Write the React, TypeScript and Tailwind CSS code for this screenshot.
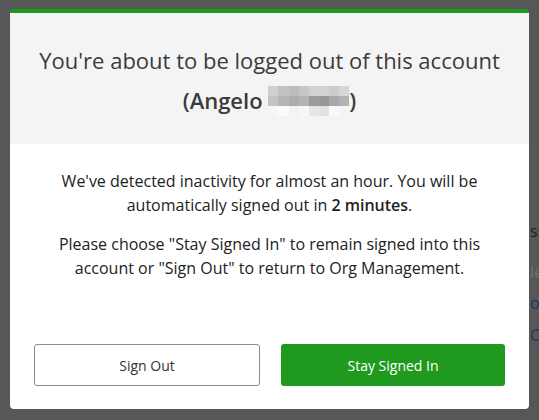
import React from 'react';

// pixelated block that hides the surname
const mosaic: string[][] = [
  ['bg-[#cfcfcf]', 'bg-[#c2c2c2]', 'bg-[#bcbcbc]', 'bg-[#c6c6c6]', 'bg-[#d2d2d2]', 'bg-[#d2d2d2]', 'bg-[#cccccc]', 'bg-[#d6d6d6]'],
  ['bg-[#c4c4c4]', 'bg-[#b6b6b6]', 'bg-[#adadad]', 'bg-[#b4b4b4]', 'bg-[#9c9c9c]', 'bg-[#989898]', 'bg-[#a9a9a9]', 'bg-[#b3b3b3]'],
  ['bg-[#f6f6f6]', 'bg-[#fbfbfb]', 'bg-[#f3f3f3]', 'bg-[#f7f7f7]', 'bg-[#e6e6e6]', 'bg-[#e2e2e2]', 'bg-[#f9f9f9]', 'bg-[#f4f4f4]'],
];

const Redacted = () => (
  <span className="inline-grid grid-cols-8 align-middle w-[81px] h-[30px] -mt-[4px]">
    {mosaic.flat().map((c, i) => (
      <span key={i} className={`${c} block`} />
    ))}
  </span>
);

export default function App() {
  return (
    <div className="h-[420px] w-[539px] overflow-hidden bg-[#575757] flex items-start font-['Open_Sans',sans-serif]">
      <div className="ml-[10px] mt-[9px] w-[519px] h-[400px] shrink-0 flex flex-col bg-white rounded-[4px] overflow-hidden border-t-4 border-[#1f9a1f]">
        <div className="bg-[#f4f4f4] h-[131px] pt-[27px] text-center text-[22px] leading-[40px] text-[#3b3b3b]">
          <div>You're about to be logged out of this account</div>
          <div className="font-semibold">
            (Angelo <Redacted />)
          </div>
        </div>

        <div className="flex-1 flex flex-col px-[24px] pb-[23px]">
          <div className="pt-[25px] px-[16px] text-center text-[16px] leading-[24px] text-[#222]">
            <p>
              We've detected inactivity for almost an hour. You will be automatically signed out in{' '}
              <span className="font-semibold">2 minutes</span>.
            </p>
            <p className="mt-[15px]">
              Please choose "Stay Signed In" to remain signed into this account or "Sign Out" to return to Org Management.
            </p>
          </div>

          <div className="mt-auto flex gap-[21px]">
            <button className="flex-1 h-[42px] rounded-[3px] border border-[#8a8a8a] bg-white text-[14px] text-[#333]">
              Sign Out
            </button>
            <button className="flex-1 h-[42px] rounded-[3px] bg-[#1f9a1f] text-[14px] text-white">
              Stay Signed In
            </button>
          </div>
        </div>
      </div>

      {/* page behind the overlay, cut by the window edge */}
      <div className="ml-[1px] pt-[221px] flex flex-col text-[16px] leading-[20px] whitespace-nowrap">
        <span className="text-[#1e1e1e]">ss</span>
        <span className="mt-[21px] text-[#707070]">le</span>
        <span className="mt-[11px] text-[#1c3a58]">oc</span>
        <span className="mt-[12px] text-[#1c3a58]">C</span>
      </div>
    </div>
  );
}
